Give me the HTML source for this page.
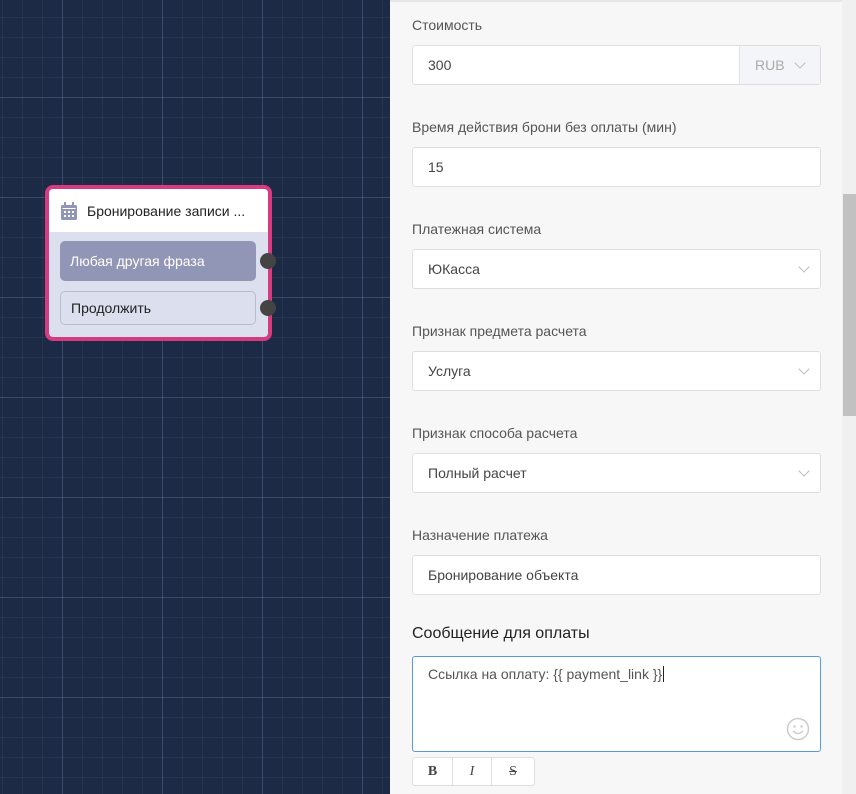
<!DOCTYPE html>
<html><head><meta charset="utf-8"><style>
*{box-sizing:border-box;margin:0;padding:0}
body{width:856px;height:794px;overflow:hidden;position:relative;font-family:"Liberation Sans","DejaVu Sans",sans-serif;background:#1c2a45}
.canvas{position:absolute;left:0;top:0;width:390px;height:794px;background-color:#1c2a45;
background-image:linear-gradient(to right,rgba(140,165,200,.2) 1px,transparent 1px),linear-gradient(to bottom,rgba(140,165,200,.2) 1px,transparent 1px),linear-gradient(to right,rgba(120,145,180,.1) 1px,transparent 1px),linear-gradient(to bottom,rgba(120,145,180,.1) 1px,transparent 1px);
background-size:100px 100px,100px 100px,20px 20px,20px 20px;background-position:62px 97px,62px 97px,2px 17px,2px 17px}
.node{position:absolute;left:45px;top:185px;width:227px;height:156px;border:4px solid #d63a80;border-radius:8px;background:#dcdfee;overflow:visible}
.nh{height:43px;background:#fff;border-radius:4px 4px 0 0;display:flex;align-items:center;font-size:14px;color:#222}
.nh svg{margin:0 10px 0 12px}
.btn{position:absolute;left:11px;width:196px;height:40px;border-radius:5px;font-size:14px;display:flex;align-items:center;padding-left:10px}
.b1{top:52px;background:#9296b6;color:#fff}
.b2{top:102px;height:34px;background:#dcdfee;border:1px solid #b8bccc;color:#222}
.dot{position:absolute;left:211px;width:16px;height:16px;border-radius:50%;background:#444}
.panel{position:absolute;left:390px;top:0;width:452px;height:794px;background:#f7f7f7;border-top:2px solid #e6e6e6}
.sb{position:absolute;left:842px;top:0;width:14px;height:794px;background:#f0f0f0}
.thumb{position:absolute;left:843px;top:194px;width:13px;height:222px;background:#c1c1c1}
.lbl{position:absolute;left:412px;font-size:14px;color:#555}
.inp{position:absolute;left:412px;width:409px;height:40px;background:#fff;border:1px solid #dedede;border-radius:3px;font-size:14px;color:#444;padding-left:15px;line-height:38px}
.chev{position:absolute;right:12px;top:13px;width:8px;height:8px;border-right:1px solid #bbb;border-bottom:1px solid #bbb;transform:rotate(45deg)}
</style></head><body>
<div class="canvas"></div>
<div class="node">
<div class="nh"><svg width="16" height="18" viewBox="0 0 16 18"><rect x="0" y="3" width="16" height="15" rx="1.5" fill="#9296b6"/><rect x="3" y="0" width="2" height="4" fill="#9296b6"/><rect x="11" y="0" width="2" height="4" fill="#9296b6"/><rect x="1.5" y="6" width="13" height="1" fill="#fff"/><g fill="#fff"><rect x="3" y="9" width="2" height="2"/><rect x="7" y="9" width="2" height="2"/><rect x="11" y="9" width="2" height="2"/><rect x="3" y="13" width="2" height="2"/><rect x="7" y="13" width="2" height="2"/><rect x="11" y="13" width="2" height="2"/></g></svg>Бронирование записи ...</div>
<div class="btn b1">Любая другая фраза</div>
<div class="btn b2">Продолжить</div>
<div class="dot" style="top:64px"></div>
<div class="dot" style="top:111px"></div>
</div>
<div class="panel"></div>
<div class="sb"></div><div class="thumb"></div>
<div class="lbl" style="top:17px">Стоимость</div>
<div class="inp" style="top:45px">300<div style="position:absolute;right:0;top:0;width:81px;height:38px;background:#f4f5f8;border-left:1px solid #e4e4e4;color:#aaa;padding-left:15px">RUB<div class="chev" style="right:16px"></div></div></div>
<div class="lbl" style="top:119px">Время действия брони без оплаты (мин)</div>
<div class="inp" style="top:147px">15</div>
<div class="lbl" style="top:221px">Платежная система</div>
<div class="inp" style="top:249px">ЮКасса<div class="chev"></div></div>
<div class="lbl" style="top:323px">Признак предмета расчета</div>
<div class="inp" style="top:351px">Услуга<div class="chev"></div></div>
<div class="lbl" style="top:425px">Признак способа расчета</div>
<div class="inp" style="top:453px">Полный расчет<div class="chev"></div></div>
<div class="lbl" style="top:527px">Назначение платежа</div>
<div class="inp" style="top:555px">Бронирование объекта</div>
<div class="lbl" style="top:625px;font-size:16px;color:#222">Сообщение для оплаты</div>
<div class="inp" style="top:656px;height:96px;border-color:#5b9bd5;line-height:18px;padding-top:8px;color:#555">Ссылка на оплату: {{ payment_link }}<span style="border-left:1px solid #222;margin-left:1px"></span>
<svg style="position:absolute;right:10px;bottom:10px" width="24" height="24" viewBox="0 0 24 24"><circle cx="12" cy="12" r="10.5" fill="none" stroke="#ccc" stroke-width="1.5"/><circle cx="8.5" cy="9.5" r="1.2" fill="#ccc"/><circle cx="15.5" cy="9.5" r="1.2" fill="#ccc"/><path d="M7 14q5 5 10 0" fill="none" stroke="#ccc" stroke-width="1.5"/></svg></div>
<div style="position:absolute;left:412px;top:757px;width:123px;height:29px;background:#fff;border:1px solid #dedede;border-radius:3px;display:flex;font-family:'Liberation Serif',serif;font-size:14px;color:#444">
<div style="width:40px;text-align:center;line-height:27px;font-weight:bold;border-right:1px solid #dedede">B</div>
<div style="width:39px;text-align:center;line-height:27px;font-style:italic;border-right:1px solid #dedede">I</div>
<div style="flex:1;text-align:center;line-height:27px;text-decoration:line-through">S</div></div>
</body></html>
